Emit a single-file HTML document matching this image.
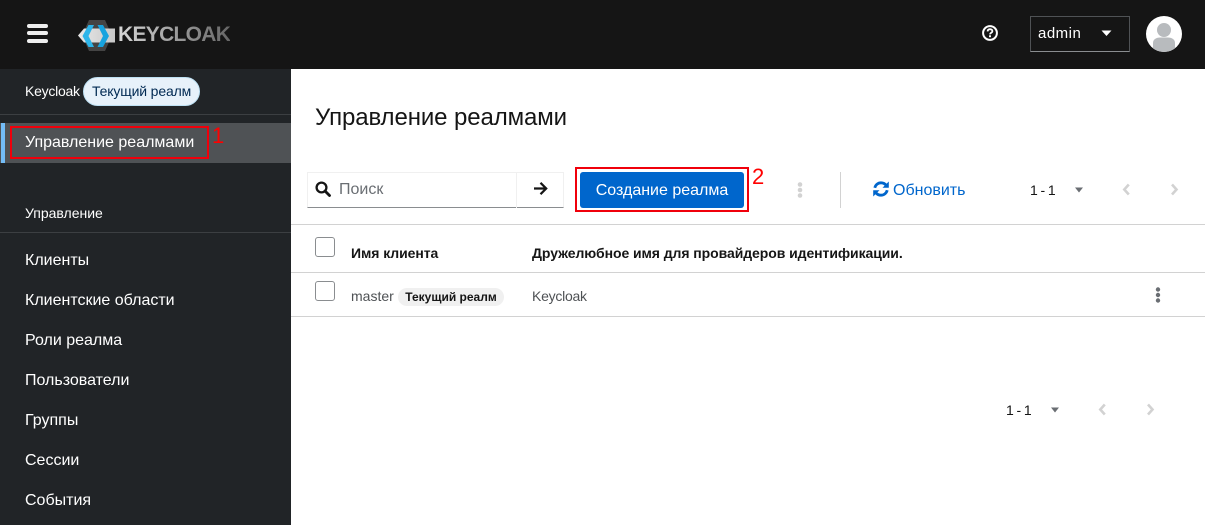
<!DOCTYPE html>
<html lang="ru"><head><meta charset="utf-8"><title>Keycloak</title>
<style>
*{box-sizing:border-box}
html,body{margin:0;padding:0;width:1205px;height:525px;overflow:hidden;background:#fff;font-family:"Liberation Sans",sans-serif;color:#151515}
.a{position:absolute;white-space:nowrap}
svg{position:absolute;display:block}
.nav{left:25px;color:#fff;font-size:16px;line-height:20px}
.th{font-size:14px;font-weight:700;line-height:18px}
.cb{position:absolute;width:20px;height:20px;border:1px solid #8a8d90;border-radius:3px;background:#fff}
.pg{font-size:14px;line-height:17px;letter-spacing:-.6px}
</style></head><body>
<div class="a" style="left:0;top:0;width:1205px;height:69px;background:#151515"></div>
<div class="a" style="left:0;top:69px;width:291px;height:456px;background:#212427"></div>

<!-- hamburger -->
<div class="a" style="left:27px;top:24px;width:21px;height:4px;background:#eee;border-radius:2px"></div>
<div class="a" style="left:27px;top:31px;width:21px;height:4px;background:#eee;border-radius:2px"></div>
<div class="a" style="left:27px;top:39px;width:21px;height:4px;background:#eee;border-radius:2px"></div>

<!-- logo -->
<svg style="left:78px;top:20px" width="40" height="32" viewBox="0 0 40 32">
<defs><linearGradient id="b" x1="0" x2="1" y1="0" y2="0"><stop offset="0" stop-color="#e8e8e8"/><stop offset="1" stop-color="#c8c8c8"/></linearGradient></defs>
<path d="M11 0H27L34 15.500L27 31H11L4 15.500Z" fill="#444"/>
<path d="M0 15.500L6 8.500H37V22.500H6Z" fill="url(#b)"/>
<path d="M10.500 5H16L10.500 16L16 27H10.500L4.500 16Z" fill="#2db5ea"/>
<path d="M19.500 5H25L31 16L25 27H19.500L25 16Z" fill="#17a3df"/>
</svg>
<div class="a" style="left:118px;top:22px;font-size:21px;font-weight:700;line-height:26px;letter-spacing:-.7px;background:linear-gradient(90deg,#d8d8d8,#666);-webkit-background-clip:text;background-clip:text;color:transparent">KEYCLOAK</div>

<!-- help -->
<svg style="left:982px;top:25px" width="16" height="16" viewBox="0 0 16 16">
<circle cx="8" cy="8" r="6.900" fill="none" stroke="#fff" stroke-width="2"/>
<path d="M5.600 6.400C5.700 4.900 6.800 4.200 8 4.200C9.400 4.200 10.400 5 10.400 6.200C10.400 7.800 8 7.700 8 9.400" fill="none" stroke="#fff" stroke-width="1.800"/>
<rect x="7" y="10.300" width="2" height="1.900" fill="#fff"/>
</svg>

<!-- admin -->
<div class="a" style="left:1030px;top:16px;width:100px;height:36px;border:1px solid #4f5255;border-bottom-color:#8a8d90"></div>
<div class="a" style="left:1038px;top:25px;font-size:15px;line-height:18px;color:#fff;letter-spacing:.5px">admin</div>
<svg style="left:1101px;top:30px" width="11" height="7" viewBox="0 0 11 7"><path d="M0.500 0.500H10.500L5.500 6Z" fill="#fff"/></svg>

<!-- avatar -->
<svg style="left:1146px;top:16px" width="36" height="36" viewBox="0 0 36 36">
<defs><clipPath id="c"><circle cx="18" cy="18" r="18"/></clipPath></defs>
<circle cx="18" cy="18" r="18" fill="#fff"/>
<g clip-path="url(#c)" fill="#b8bbbe"><circle cx="18" cy="14" r="7"/><path d="M7 36V27C7 23.500 10 21.500 14 21.500H22C26 21.500 29 23.500 29 27V36Z"/></g>
</svg>

<!-- sidebar -->
<div class="a" style="left:25px;top:83px;font-size:14px;line-height:17px;color:#fff;letter-spacing:-.25px">Keycloak</div>
<div class="a" style="left:83px;top:77px;width:117px;height:29px;border-radius:15px;background:#e7f1fa;border:1px solid #bee1f4;color:#002952;font-size:14px;line-height:27px;padding-left:8px;letter-spacing:-.15px">Текущий реалм</div>
<div class="a" style="left:0;top:114px;width:291px;height:1px;background:#3c3f42"></div>
<div class="a" style="left:0;top:123px;width:291px;height:40px;background:#4f5255"></div>
<div class="a" style="left:1px;top:123px;width:4px;height:40px;background:#73bcf7"></div>
<div class="a" style="left:10px;top:126px;width:199px;height:33px;border:2px solid #f0000b"></div>
<div class="a nav" style="top:133px">Управление реалмами</div>
<div class="a" style="left:212px;top:123px;font-size:22px;line-height:26px;color:#f00">1</div>
<div class="a" style="left:25px;top:205px;font-size:14px;line-height:17px;color:#fff">Управление</div>
<div class="a" style="left:0;top:232px;width:291px;height:1px;background:#3c3f42"></div>
<div class="a nav" style="top:251px">Клиенты</div>
<div class="a nav" style="top:291px">Клиентские области</div>
<div class="a nav" style="top:331px">Роли реалма</div>
<div class="a nav" style="top:371px">Пользователи</div>
<div class="a nav" style="top:411px">Группы</div>
<div class="a nav" style="top:451px">Сессии</div>
<div class="a nav" style="top:491px">События</div>

<!-- main -->
<div class="a" style="left:315px;top:103px;font-size:24px;line-height:30px;letter-spacing:-.1px">Управление реалмами</div>

<!-- search -->
<div class="a" style="left:307px;top:172px;width:257px;height:36px;border:1px solid #f0f0f0;border-bottom:1px solid #8a8d90"></div>
<div class="a" style="left:516px;top:172px;width:1px;height:36px;background:#f0f0f0"></div>
<svg style="left:315px;top:181px" width="16" height="16" viewBox="0 0 16 16"><circle cx="6.500" cy="6.500" r="4.900" fill="none" stroke="#151515" stroke-width="2.300"/><path d="M10 10L14.500 14.500" stroke="#151515" stroke-width="2.800" stroke-linecap="round"/></svg>
<div class="a" style="left:339px;top:180px;font-size:16px;line-height:19px;color:#6a6e73">Поиск</div>
<svg style="left:533px;top:181px" width="15" height="15" viewBox="0 0 15 15"><path d="M1 7.500H13M7.500 1.800L13.200 7.500L7.500 13.200" fill="none" stroke="#151515" stroke-width="2.200"/></svg>

<!-- create -->
<div class="a" style="left:575px;top:167px;width:174px;height:45px;border:2px solid #f0000b"></div>
<div class="a" style="left:580px;top:172px;width:164px;height:36px;background:#06c;border-radius:3px;color:#fff;font-size:16px;line-height:37px;text-align:center">Создание реалма</div>
<div class="a" style="left:752px;top:164px;font-size:22px;line-height:26px;color:#f00">2</div>

<!-- kebab disabled -->
<svg style="left:796px;top:181px" width="8" height="18" viewBox="0 0 8 18" fill="#d2d2d2"><circle cx="4" cy="3.500" r="2.300"/><circle cx="4" cy="9" r="2.300"/><circle cx="4" cy="14.500" r="2.300"/></svg>
<div class="a" style="left:840px;top:172px;width:1px;height:36px;background:#d2d2d2"></div>

<!-- refresh -->
<svg style="left:873px;top:181px" width="16" height="16" viewBox="0 0 16 16" fill="none" stroke="#06c" stroke-width="2.800">
<path d="M1.800 6.800C2.500 3.900 5 1.800 8 1.800C10.200 1.800 12 2.800 13.200 4.400"/>
<path d="M14.200 9.200C13.500 12.100 11 14.200 8 14.200C5.800 14.200 4 13.200 2.800 11.600"/>
<path d="M15.800 .5V6.800H9.500Z M.2 15.500V9.200H6.500Z" fill="#06c" stroke="none"/>
</svg>
<div class="a" style="left:893px;top:181px;font-size:16px;line-height:19px;color:#06c">Обновить</div>

<!-- pagination top -->
<div class="a pg" style="left:1030px;top:182px">1 - 1</div>
<svg style="left:1074px;top:187px" width="10" height="6" viewBox="0 0 10 6"><path d="M1 0.500H9L5 5.500Z" fill="#6a6e73"/></svg>
<svg style="left:1122px;top:183px" width="9" height="13" viewBox="0 0 9 13"><path d="M6.800 1.500L2.300 6.500L6.800 11.500" fill="none" stroke="#d2d2d2" stroke-width="2.600"/></svg>
<svg style="left:1170px;top:183px" width="9" height="13" viewBox="0 0 9 13"><path d="M2 1.500L6.500 6.500L2 11.500" fill="none" stroke="#d2d2d2" stroke-width="2.600"/></svg>

<!-- table -->
<div class="a" style="left:291px;top:224px;width:914px;height:1px;background:#d2d2d2"></div>
<div class="cb" style="left:315px;top:237px"></div>
<div class="a th" style="left:351px;top:244px;letter-spacing:-.07px">Имя клиента</div>
<div class="a th" style="left:532px;top:244px;letter-spacing:-.07px">Дружелюбное имя для провайдеров идентификации.</div>
<div class="a" style="left:291px;top:272px;width:914px;height:1px;background:#d2d2d2"></div>
<div class="cb" style="left:315px;top:281px"></div>
<div class="a" style="left:351px;top:288px;font-size:14px;line-height:17px;color:#4f5255">master</div>
<div class="a" style="left:398px;top:288px;width:106px;height:18px;border-radius:9px;background:#f0f0f0;font-size:12px;font-weight:700;line-height:18px;text-align:center">Текущий реалм</div>
<div class="a" style="left:532px;top:288px;font-size:14px;line-height:17px;color:#4f5255;letter-spacing:-.25px">Keycloak</div>
<svg style="left:1154px;top:286px" width="8" height="18" viewBox="0 0 8 18" fill="#6a6e73"><circle cx="4" cy="3.500" r="2.200"/><circle cx="4" cy="9" r="2.200"/><circle cx="4" cy="14.500" r="2.200"/></svg>
<div class="a" style="left:291px;top:316px;width:914px;height:1px;background:#d2d2d2"></div>

<!-- pagination bottom -->
<div class="a pg" style="left:1006px;top:402px">1 - 1</div>
<svg style="left:1050px;top:407px" width="10" height="6" viewBox="0 0 10 6"><path d="M1 0.500H9L5 5.500Z" fill="#6a6e73"/></svg>
<svg style="left:1098px;top:403px" width="9" height="13" viewBox="0 0 9 13"><path d="M6.800 1.500L2.300 6.500L6.800 11.500" fill="none" stroke="#d2d2d2" stroke-width="2.600"/></svg>
<svg style="left:1146px;top:403px" width="9" height="13" viewBox="0 0 9 13"><path d="M2 1.500L6.500 6.500L2 11.500" fill="none" stroke="#d2d2d2" stroke-width="2.600"/></svg>
</body></html>
